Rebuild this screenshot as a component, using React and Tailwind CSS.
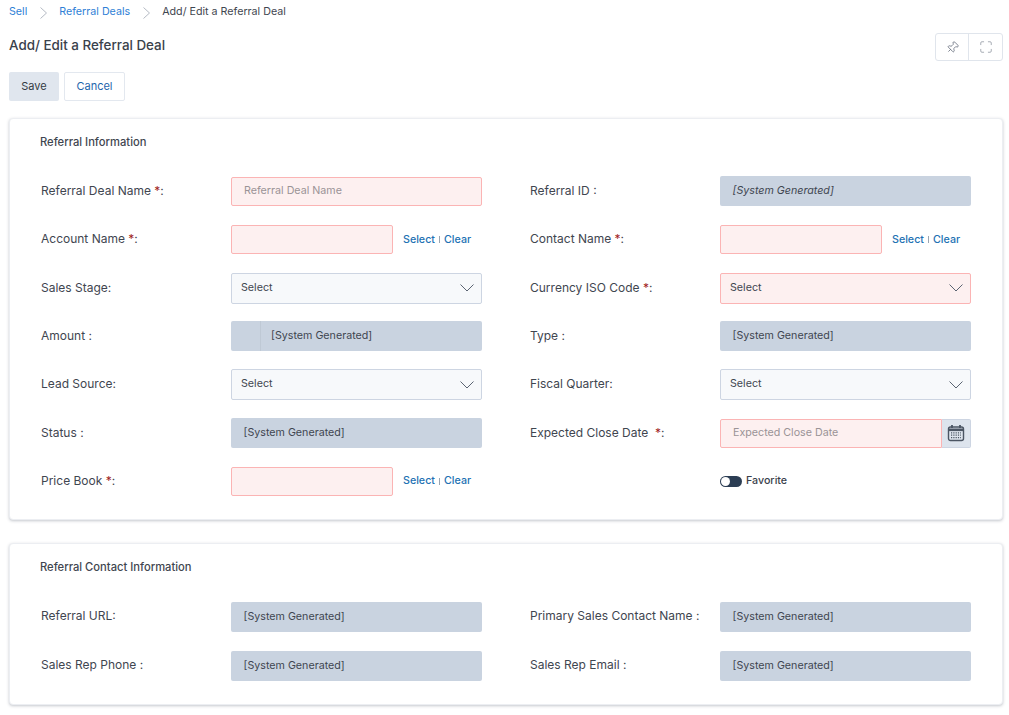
import { Pin, Maximize } from "lucide-react";

function Chevron({ className }) {
  return (
    <svg className={className} width="14" height="8" viewBox="0 0 14 8" fill="none" stroke="currentColor" strokeWidth="1">
      <path d="M0.5 0.5 L7 7 L13.5 0.5" />
    </svg>
  );
}

function Crumb() {
  return (
    <svg className="text-[#b4bac4]" width="7" height="12" viewBox="0 0 7 12" fill="none" stroke="currentColor" strokeWidth="1">
      <path d="M0.5 0.5 L6.5 6 L0.5 11.5" />
    </svg>
  );
}

function Calendar() {
  return (
    <svg width="18" height="18" viewBox="0 0 18 18" fill="none" className="text-[#4b5563]">
      <rect x="1.5" y="3" width="15" height="13.5" rx="2" stroke="currentColor" strokeWidth="1.4" />
      <path d="M1.5 5.8H16.5" stroke="currentColor" strokeWidth="2.6" />
      <path d="M5 1V4M13 1V4" stroke="currentColor" strokeWidth="1.8" />
      <path d="M4 8.9H14M4 11.2H14M4 13.6H14" stroke="currentColor" strokeWidth="1.3" strokeDasharray="1.2 1.1" />
    </svg>
  );
}

function Star() {
  return <span className="text-[#a11d1d]">*</span>;
}

function Label({ children }) {
  return <div className="w-[190px] shrink-0 text-[12px] text-[#3f4650] -mt-[1px]">{children}</div>;
}

function Row({ children }) {
  return <div className="flex items-center h-[30px]">{children}</div>;
}

function Sys({ italic }) {
  return (
    <div className={`w-[251px] h-[30px] rounded-[2px] bg-[#c9d3e0] flex items-center pl-[12.5px] text-[10.7px] text-[#3f4650] ${italic ? "italic" : ""}`}>
      [System Generated]
    </div>
  );
}

function Required({ placeholder, wide }) {
  return (
    <div className={`${wide ? "w-[251px]" : "w-[162px]"} h-[29px] rounded-[2px] bg-[#fdf0f0] border border-[#fbb4b4] flex items-center pl-[12px] text-[10.7px] text-[#9a9396]`}>
      {placeholder}
    </div>
  );
}

function Lookup() {
  return (
    <div className="flex items-center">
      <Required />
      <div className="ml-[10px] text-[10.7px] text-[#2271b3] flex items-center font-medium">
        <span>Select</span>
        <span className="mx-[4px] w-px h-[7px] bg-[#9aa5b1]" />
        <span>Clear</span>
      </div>
    </div>
  );
}

function SelectBox({ error }) {
  return (
    <div className={`w-[251px] h-[31px] rounded-[2px] border flex items-center justify-between pl-[9px] pr-[7px] text-[10.7px] text-[#3f4650] ${error ? "bg-[#fdf0f0] border-[#fbb4b4]" : "bg-[#f7f9fb] border-[#cdd5e2]"}`}>
      <span className="-mt-[1px]">Select</span>
      <Chevron className="text-[#5b6472]" />
    </div>
  );
}

function Card({ title, className, children }) {
  return (
    <div className={`rounded-[4px] bg-white border border-[#eceef2] shadow-[0_1px_3px_rgba(60,70,90,0.3)] px-[31px] ${className}`}>
      <div className="-ml-[1px] text-[11.2px] font-medium text-[#3f4650]">{title}</div>
      {children}
    </div>
  );
}

export default function App() {
  return (
    <div className="h-[715px] overflow-hidden bg-white pl-[9px] pr-[6px] font-['Inter',sans-serif]">
      <div className="flex items-center h-[25px] text-[10.7px]">
        <span className="text-[#2f7fd6]">Sell</span>
        <span className="mx-[12.5px]"><Crumb /></span>
        <span className="text-[#2f7fd6]">Referral Deals</span>
        <span className="mx-[12.5px]"><Crumb /></span>
        <span className="text-[#3f4650]">Add/ Edit a Referral Deal</span>
      </div>

      <div className="flex justify-between items-start mt-[8px] h-[39px]">
        <div className="text-[13.4px] font-medium text-[#3a414b] mt-[2px]">Add/ Edit a Referral Deal</div>
        <div className="flex w-[68px] h-[28px] border border-[#e0e5ec] rounded-[3px] text-[#6b7280]">
          <div className="w-[33px] flex items-center justify-center border-r border-[#e0e5ec]">
            <Pin size={13} strokeWidth={1.5} className="rotate-45" />
          </div>
          <div className="flex-1 flex items-center justify-center text-[#8d949e]">
            <Maximize size={14} strokeWidth={1.3} />
          </div>
        </div>
      </div>

      <div className="flex gap-[5px] text-[11px]">
        <div className="w-[50px] h-[29px] rounded-[2px] bg-[#e0e6ee] text-[#333a44] flex items-center justify-center">Save</div>
        <div className="w-[61px] h-[29px] rounded-[2px] border border-[#e3e8ef] bg-white text-[#1f66ac] flex items-center justify-center">Cancel</div>
      </div>

      <Card title="Referral Information" className="mt-[17px] h-[402px] pt-[15px]">
        <div className="mt-[25.6px] grid grid-cols-[441px_441px] gap-x-[48px] gap-y-[18.33px]">
          <Row><Label>Referral Deal Name <Star />:</Label><Required wide placeholder="Referral Deal Name" /></Row>
          <Row><Label>Referral ID :</Label><Sys italic /></Row>
          <Row><Label>Account Name <Star />:</Label><Lookup /></Row>
          <Row><Label>Contact Name <Star />:</Label><Lookup /></Row>
          <Row><Label>Sales Stage:</Label><SelectBox /></Row>
          <Row><Label>Currency ISO Code <Star />:</Label><SelectBox error /></Row>
          <Row>
            <Label>Amount :</Label>
            <div className="w-[251px] h-[30px] rounded-[2px] bg-[#c9d3e0] flex items-center text-[10.7px] text-[#3f4650]">
              <div className="w-[30px] h-full border-r border-[#bfc9d5]" />
              <span className="ml-[10px]">[System Generated]</span>
            </div>
          </Row>
          <Row><Label>Type :</Label><Sys /></Row>
          <Row><Label>Lead Source:</Label><SelectBox /></Row>
          <Row><Label>Fiscal Quarter:</Label><SelectBox /></Row>
          <Row><Label>Status :</Label><Sys /></Row>
          <Row>
            <Label>Expected Close Date &nbsp;<Star />:</Label>
            <div className="flex w-[251px] h-[29px]">
              <div className="w-[222px] rounded-l-[2px] bg-[#fdf0f0] border border-[#fbb4b4] flex items-center pl-[12px] text-[10.7px] text-[#9a9396]">Expected Close Date</div>
              <div className="flex-1 rounded-r-[2px] bg-[#dde4ed] border border-l-0 border-[#cdd5e2] flex items-center justify-center"><Calendar /></div>
            </div>
          </Row>
          <Row><Label>Price Book <Star />:</Label><Lookup /></Row>
          <Row>
            <div className="w-[190px] shrink-0" />
            <div className="flex items-center gap-[4px] text-[10.7px] font-medium text-[#3a414b]">
              <div className="w-[22px] h-[11px] rounded-full bg-[#2c3e54] flex items-center pl-[1px]">
                <div className="w-[9px] h-[9px] rounded-full bg-white" />
              </div>
              Favorite
            </div>
          </Row>
        </div>
      </Card>

      <Card title="Referral Contact Information" className="mt-[23px] h-[162px] pt-[15px]">
        <div className="mt-[26px] grid grid-cols-[441px_441px] gap-x-[48px] gap-y-[19px]">
          <Row><Label>Referral URL:</Label><Sys /></Row>
          <Row><Label>Primary Sales Contact Name :</Label><Sys /></Row>
          <Row><Label>Sales Rep Phone :</Label><Sys /></Row>
          <Row><Label>Sales Rep Email :</Label><Sys /></Row>
        </div>
      </Card>
    </div>
  );
}
